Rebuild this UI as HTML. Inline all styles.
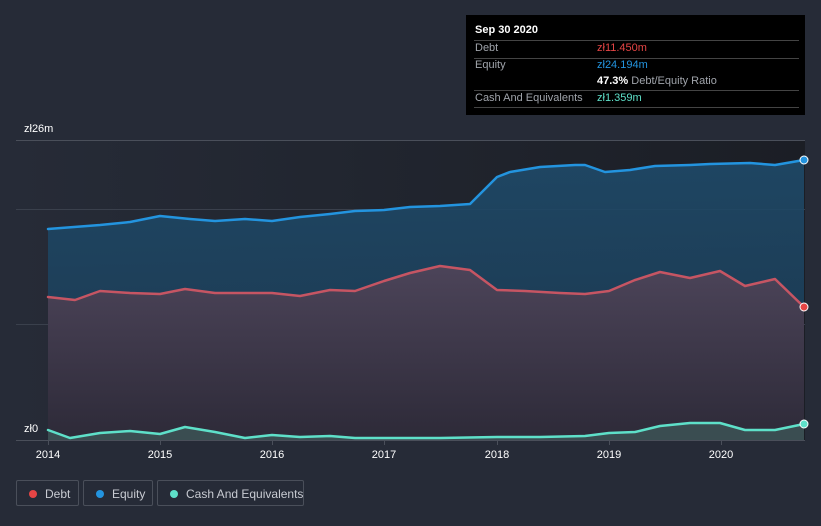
<!DOCTYPE html>
<html><head><meta charset="utf-8"><style>
html,body{margin:0;padding:0;width:821px;height:526px;overflow:hidden;background:#262b37;font-family:"Liberation Sans",sans-serif;}
.tip{position:absolute;left:466px;top:15px;width:339px;height:100px;background:#000;color:#fff;font-size:11px;}
.tip .r{position:absolute;left:8px;right:6px;border-top:1px solid #444;}
.leg{position:absolute;top:480px;height:26px;border:1px solid #4a4f5a;border-radius:2px;color:#c8cbd2;font-size:12px;line-height:26px;box-sizing:border-box;white-space:nowrap;}
.leg i{position:absolute;left:12px;top:9px;width:8px;height:8px;border-radius:50%;}
.leg span{position:absolute;left:28px;white-space:nowrap;}
</style></head><body>
<svg width="821" height="526" style="position:absolute;left:0;top:0">
<defs>
<linearGradient id="bg" x1="0" x2="1" y1="0" y2="0"><stop offset="0" stop-color="#262b37"/><stop offset="1" stop-color="#1b1e25"/></linearGradient>
<linearGradient id="eq" x1="0" x2="0" y1="0" y2="1"><stop offset="0" stop-color="#1f4a69" stop-opacity=".9"/><stop offset="1" stop-color="#1a3850" stop-opacity=".9"/></linearGradient>
<linearGradient id="db" x1="0" x2="0" y1="0" y2="1"><stop offset="0" stop-color="#4c4459"/><stop offset="1" stop-color="#2d2a38"/></linearGradient>
</defs>
<rect x="16" y="140" width="789" height="300" fill="url(#bg)"/>
<line x1="16" y1="140.5" x2="805" y2="140.5" stroke="#4a4f5a"/>
<line x1="16" y1="209.5" x2="805" y2="209.5" stroke="#3a404c"/>
<line x1="16" y1="324.5" x2="805" y2="324.5" stroke="#3a404c"/>
<path d="M48,229 L100,225 130,222 160,216 190,219 215,221 245,219 272,221 300,217 330,214 355,211 384,210 410,207 440,206 470,204 497,177 510,172 540,167 575,165 585,165 605,172 630,170 655,166 690,165 710,164 750,163 775,165 804,160 L804,440 48,440Z" fill="url(#eq)"/>
<path d="M48,297 L75,300 100,291 130,293 160,294 185,289 215,293 245,293 272,293 300,296 330,290 355,291 384,281 410,273 440,266 470,270 497,290 525,291 560,293 585,294 609,291 635,280 660,272 690,278 720,271 745,286 775,279 804,307 L804,440 48,440Z" fill="url(#db)"/>
<path d="M48,430 L70,438 100,433 130,431 160,434 185,427 215,432 245,438 272,435 300,437 330,436 355,438 384,438 440,438 497,437 540,437 585,436 609,433 635,432 660,426 690,423 720,423 745,430 775,430 804,424 L804,440 48,440Z" fill="#3d5658" opacity=".8"/>
<g fill="none" stroke-width="2.5" stroke-linejoin="round" stroke-linecap="round">
<path d="M48,229 L100,225 130,222 160,216 190,219 215,221 245,219 272,221 300,217 330,214 355,211 384,210 410,207 440,206 470,204 497,177 510,172 540,167 575,165 585,165 605,172 630,170 655,166 690,165 710,164 750,163 775,165 804,160" stroke="#2394df"/>
<path d="M48,297 L75,300 100,291 130,293 160,294 185,289 215,293 245,293 272,293 300,296 330,290 355,291 384,281 410,273 440,266 470,270 497,290 525,291 560,293 585,294 609,291 635,280 660,272 690,278 720,271 745,286 775,279 804,307" stroke="#c65563"/>
<path d="M48,430 L70,438 100,433 130,431 160,434 185,427 215,432 245,438 272,435 300,437 330,436 355,438 384,438 440,438 497,437 540,437 585,436 609,433 635,432 660,426 690,423 720,423 745,430 775,430 804,424" stroke="#5ee0c9"/>
</g>
<circle cx="804" cy="160" r="4" fill="#2394df" stroke="#fff" stroke-width="1"/>
<circle cx="804" cy="307" r="4" fill="#e64545" stroke="#fff" stroke-width="1"/>
<circle cx="804" cy="424" r="4" fill="#5ee0c9" stroke="#fff" stroke-width="1"/>
<line x1="16" y1="440.5" x2="805" y2="440.5" stroke="#4a4f5a"/>
<g stroke="#4a4f5a"><line x1="48.5" y1="440" x2="48.5" y2="445"/><line x1="160.5" y1="440" x2="160.5" y2="445"/><line x1="272.5" y1="440" x2="272.5" y2="445"/><line x1="384.5" y1="440" x2="384.5" y2="445"/><line x1="497.5" y1="440" x2="497.5" y2="445"/><line x1="609.5" y1="440" x2="609.5" y2="445"/><line x1="721.5" y1="440" x2="721.5" y2="445"/></g>
<g fill="#fff" font-size="11" font-family="Liberation Sans,sans-serif">
<text x="24" y="132">zł26m</text><text x="24" y="432">zł0</text>
<g text-anchor="middle"><text x="48" y="458">2014</text><text x="160" y="458">2015</text><text x="272" y="458">2016</text><text x="384" y="458">2017</text><text x="497" y="458">2018</text><text x="609" y="458">2019</text><text x="721" y="458">2020</text></g>
</g>
</svg>
<div class="tip">
<div style="position:absolute;left:9px;top:9px;font-weight:bold">Sep 30 2020</div>
<div class="r" style="top:25px"></div>
<div style="position:absolute;left:9px;top:27px;color:#a0a4ab">Debt</div>
<div style="position:absolute;left:131px;top:27px;color:#e64545">zł11.450m</div>
<div class="r" style="top:43px"></div>
<div style="position:absolute;left:9px;top:44px;color:#a0a4ab">Equity</div>
<div style="position:absolute;left:131px;top:44px;color:#2394df">zł24.194m</div>
<div style="position:absolute;left:131px;top:60px;color:#a0a4ab"><b style="color:#fff">47.3%</b> Debt/Equity Ratio</div>
<div class="r" style="top:75px"></div>
<div style="position:absolute;left:9px;top:77px;color:#a0a4ab">Cash And Equivalents</div>
<div style="position:absolute;left:131px;top:77px;color:#5ee0c9">zł1.359m</div>
<div class="r" style="top:92px"></div>
</div>
<div class="leg" style="left:16px;width:63px"><i style="background:#e64545"></i><span>Debt</span></div>
<div class="leg" style="left:83px;width:70px"><i style="background:#2394df"></i><span>Equity</span></div>
<div class="leg" style="left:157px;width:147px"><i style="background:#5ee0c9"></i><span>Cash And Equivalents</span></div>
</body></html>
